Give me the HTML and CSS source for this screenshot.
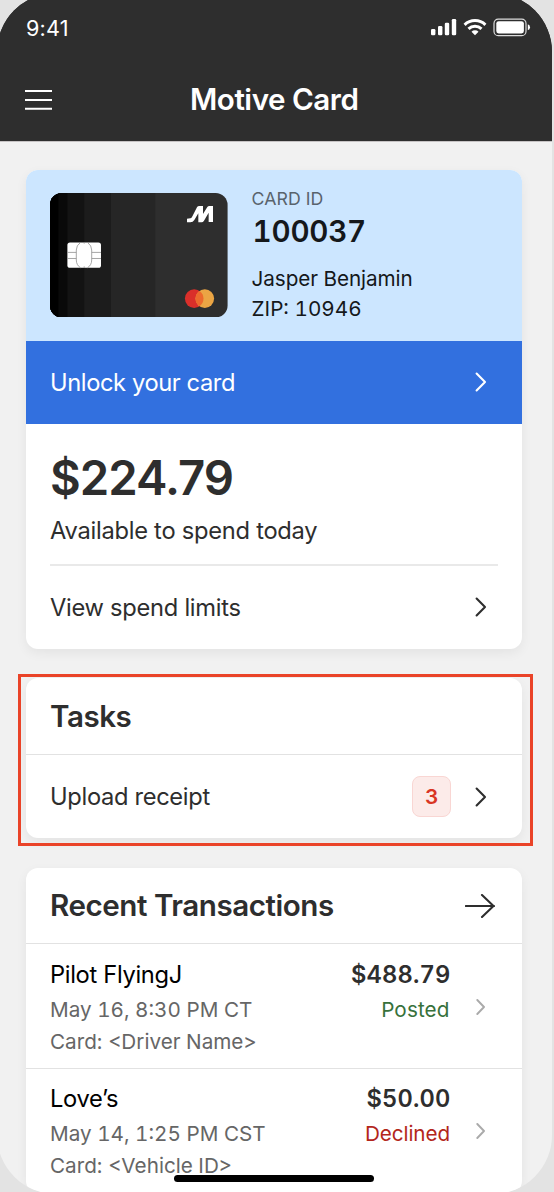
FILE: index.html
```
<!DOCTYPE html>
<html lang="en">
<head>
<meta charset="utf-8">
<title>Motive Card</title>
<link rel="stylesheet" href="styles.css">
</head>
<body>
<div class="phone">
  <header class="header">
    <div class="status">
      <span class="time">9:41</span>
      <svg class="status-icons" viewBox="431 18 100 19" fill="#fff">
        <rect x="431" y="29" width="4.4" height="6.2" rx="1.3"/>
        <rect x="438" y="26" width="4.4" height="9.2" rx="1.3"/>
        <rect x="444.8" y="22.7" width="4.4" height="12.5" rx="1.3"/>
        <rect x="451.8" y="19" width="4.4" height="16.2" rx="1.3"/>
        <g fill="none" stroke="#fff" stroke-width="3">
          <path d="M464.6 24.8 A15 15 0 0 1 485.4 24.8"/>
          <path d="M468.5 28.8 A9.4 9.4 0 0 1 481.5 28.8"/>
        </g>
        <path d="M471.5 31.8 A5 5 0 0 1 478.5 31.8 L475 35.3 Z"/>
        <rect x="494" y="19.2" width="32" height="16.4" rx="4.2" fill="none" stroke="#dcdcdc" stroke-width="1.2"/>
        <rect x="496.3" y="21.2" width="27.6" height="12.2" rx="2.4"/>
        <path d="M527.8 24.3 Q530 25 530 27.3 Q530 29.6 527.8 30.3 Z"/>
      </svg>
    </div>
    <div class="nav">
      <svg class="menu" viewBox="0 0 27 20" stroke="#fff" stroke-width="2"><path d="M0 1H27M0 10H27M0 18.8H27"/></svg>
      <h1 class="title">Motive Card</h1>
    </div>
  </header>

  <main class="content">
    <section class="card">
      <div class="summary">
        <svg class="plastic" viewBox="50 193 177.6 124.4">
          <clipPath id="edge"><rect x="50" y="193" width="177.6" height="124.4" rx="12"/></clipPath>
          <g clip-path="url(#edge)">
            <rect x="50" y="193" width="178" height="125" fill="#2e2e2e"/>
            <rect x="50" y="193" width="105.3" height="125" fill="#262626"/>
            <rect x="50" y="193" width="61" height="125" fill="#1c1c1c"/>
            <rect x="50" y="193" width="34.2" height="125" fill="#131313"/>
            <rect x="50" y="193" width="17.4" height="125" fill="#090909"/>
            <rect x="50" y="193" width="8.4" height="125" fill="#000"/>
          </g>
          <rect x="67.4" y="242.4" width="33.6" height="25.4" rx="2.6" fill="#fff"/>
          <path d="M67.4 252.4H76.3M67.4 258.5H76.3M91.7 252.4H101M91.7 258.5H101M80.5 242.4Q76.3 245.5 76.3 250V260Q76.3 265 80.5 267.8M87.5 242.4Q91.7 245.5 91.7 250V260Q91.7 265 87.5 267.8M84.2 242.4V243.6M84.2 266.4V267.8" fill="none" stroke="#8f8f8f" stroke-width=".8"/>
          <path transform="translate(20 160) scale(.33333)" fill="#fff" d="M501 176L511 175Q514 175 516 171L531 142Q533 138 538 138L549 138L549 162L562 141Q564 138 568 138L579 138L579 186L566 186L566 158L552 182Q549 187 545 187L535 187L535 160L523 180Q519 187 511 187L501 187Z"/>
          <circle cx="194.2" cy="298.6" r="9.3" fill="#da2f2a"/>
          <circle cx="204.8" cy="298.6" r="9.3" fill="#eba544"/>
          <path d="M199.5 290.95A9.3 9.3 0 0 1 199.5 306.25A9.3 9.3 0 0 1 199.5 290.95Z" fill="#ec6a2d"/>
        </svg>
        <div class="holder">
          <span class="label">CARD ID</span>
          <span class="card-id">100037</span>
          <span class="small">Jasper Benjamin</span>
          <span class="small zip">ZIP: 10946</span>
        </div>
      </div>
      <div class="row unlock">
        <span class="body">Unlock your card</span>
        <svg class="chevron" viewBox="0 0 12 20"><path d="M1.6 1.6L10 10L1.6 18.4"/></svg>
      </div>
      <div class="balance">
        <div class="amount">$224.79</div>
        <div class="body available">Available to spend today</div>
      </div>
      <div class="row limits">
        <span class="body">View spend limits</span>
        <svg class="chevron" viewBox="0 0 12 20"><path d="M1.6 1.6L10 10L1.6 18.4"/></svg>
      </div>
    </section>

    <div class="highlighted">
      <section class="card">
        <div class="head"><h2 class="heading">Tasks</h2></div>
        <div class="row upload">
          <span class="body">Upload receipt</span>
          <span class="badge">3</span>
          <svg class="chevron" viewBox="0 0 12 20"><path d="M1.6 1.6L10 10L1.6 18.4"/></svg>
        </div>
      </section>
      <div class="highlight"></div>
    </div>

    <section class="card list">
      <div class="head">
        <h2 class="heading recent">Recent Transactions</h2>
        <svg class="arrow" viewBox="0 0 30 24"><path d="M.8 12H29M17 1L28.5 12L17 23"/></svg>
      </div>
      <div class="txn">
        <div class="who">
          <div class="name">Pilot FlyingJ</div>
          <div class="meta">May 16, 8:30 PM CT</div>
          <div class="meta">Card: &lt;Driver Name&gt;</div>
        </div>
        <div class="sum">
          <div class="price">$488.79</div>
          <div class="meta posted">Posted</div>
        </div>
        <svg class="chevron small-chevron" viewBox="0 0 10 16"><path d="M1.3 1L8 8L1.3 15"/></svg>
      </div>
      <div class="txn">
        <div class="who">
          <div class="name">Love’s</div>
          <div class="meta">May 14, 1:25 PM CST</div>
          <div class="meta">Card: &lt;Vehicle ID&gt;</div>
        </div>
        <div class="sum">
          <div class="price">$50.00</div>
          <div class="meta declined">Declined</div>
        </div>
        <svg class="chevron small-chevron" viewBox="0 0 10 16"><path d="M1.3 1L8 8L1.3 15"/></svg>
      </div>
    </section>
  </main>
  <div class="home-indicator"></div>
</div>
</body>
</html>
```
FILE: styles.css
```
* { box-sizing: border-box; }
body {
  margin: 0;
  height: 1192px;
  overflow: hidden;
  background: #e3e3e3;
  font-family: Inter, "Liberation Sans", sans-serif;
  color: #2e2e2e;
}
h1, h2 { margin: 0; }
svg { display: block; flex: none; }

.phone {
  position: relative;
  width: 554.5px;
  height: 1201px;
  margin: -7px 0 0 -3px;
  padding-top: 7px;
  border-radius: 59px;
  overflow: hidden;
  background: linear-gradient(#2e2e2e 80px, #f1f1f1 80px);
}
.header {
  height: 142px;
  background: #2e2e2e;
  border-bottom: 1px solid #c6c3c4;
  color: #fff;
}
.status {
  display: flex;
  align-items: center;
  justify-content: space-between;
  height: 57px;
  padding: 0 20.5px 0 29px;
}
.time { margin-bottom: 2px; font-size: 21.6px; line-height: 28px; letter-spacing: .2px; }
.status-icons { width: 100px; height: 19px; margin-bottom: 2px; }
.nav {
  display: grid;
  grid-template-columns: 27px 1fr 27px;
  align-items: center;
  height: 84px;
  padding: 1px 28px 0;
}
.menu { width: 27px; height: 20px; }
.title { margin-bottom: 2px; font-size: 29.6px; font-weight: 600; line-height: 36px; letter-spacing: -.47px; text-align: center; }

.content {
  display: flex;
  flex-direction: column;
  gap: 29.5px;
  padding: 27.5px 29.5px 0 29px;
}
.card {
  border-radius: 12px;
  background: #fff;
  box-shadow: 0 4px 12px rgba(0, 0, 0, .06);
  overflow: hidden;
}
.summary {
  display: flex;
  gap: 24px;
  height: 171.2px;
  padding: 23.5px 24px 0;
  background: #cce6ff;
}
.plastic { width: 177.6px; height: 124.4px; }
.holder { display: flex; flex-direction: column; color: #15181b; }
.label { margin-top: -4px; font-size: 17.7px; line-height: 20px; letter-spacing: .05px; color: #59636c; }
.card-id {
  margin: 4px 0 15px 1px;
  font-size: 29.6px;
  font-weight: 600;
  line-height: 36px;
  letter-spacing: -.25px;
  font-variant-numeric: tabular-nums;
}
.small { font-size: 20.7px; line-height: 29.5px; letter-spacing: -.08px; font-variant-numeric: tabular-nums; }
.zip { letter-spacing: 0; }

.row {
  display: flex;
  align-items: center;
  height: 82.8px;
  padding: 0 35px 0 24px;
}
.row .body { flex: 1; }
.body { font-size: 23.7px; line-height: 32px; letter-spacing: -.33px; }
.available { letter-spacing: -.26px; }
.unlock { height: 82.9px; background: #3270df; color: #fff; }
.unlock .body { padding-top: 1px; letter-spacing: -.4px; }
.limits .body { padding-top: 2px; letter-spacing: -.28px; }
.chevron { width: 12px; height: 20px; fill: none; stroke: currentColor; stroke-width: 2.1; stroke-linecap: round; stroke-linejoin: round; }
.balance {
  height: 142.4px;
  margin: 0 24px;
  padding-top: 25.6px;
  border-bottom: 2px solid #e9e9e9;
}
.amount { margin-bottom: 8.5px; font-size: 47.3px; font-weight: 600; line-height: 57px; letter-spacing: -.98px; }

.head {
  display: flex;
  align-items: center;
  justify-content: space-between;
  height: 76.5px;
  padding: 0 27.5px 0 24px;
  border-bottom: 1px solid #e2e2e2;
}
.heading { font-size: 29.6px; font-weight: 600; line-height: 36px; letter-spacing: -.47px; }
.recent { margin-bottom: 1px; }
.highlighted { position: relative; }
.highlight {
  position: absolute;
  inset: -4px -10.5px -7.5px -8.5px;
  border: 3px solid #ea4328;
}
.upload { height: 83.5px; }
.badge {
  width: 38.4px;
  height: 41px;
  margin-right: 24.2px;
  border: 1px solid #f9d6d3;
  border-radius: 8px;
  background: #fcebe9;
  color: #d93524;
  font-size: 20.7px;
  font-weight: 600;
  line-height: 39px;
  text-align: center;
}
.arrow { width: 30px; height: 24px; fill: none; stroke: #2e2e2e; stroke-width: 2.1; stroke-linecap: round; stroke-linejoin: round; }

.txn {
  display: flex;
  height: 124.3px;
  padding: 15.3px 36.5px 0 24px;
  border-bottom: 1px solid #e2e2e2;
}
.who { flex: 1; }
.name { margin-bottom: 4.2px; font-size: 23.7px; line-height: 30px; letter-spacing: -.33px; color: #000; }
.meta { font-size: 20.7px; line-height: 32.3px; letter-spacing: 0; color: #666; font-variant-numeric: tabular-nums; }
.sum { margin-right: 25px; text-align: right; }
.price { margin-bottom: 4.2px; font-size: 23.7px; font-weight: 600; line-height: 30px; letter-spacing: .15px; font-variant-numeric: tabular-nums; }
.posted { padding-right: 1px; letter-spacing: .1px; color: #37713b; }
.declined { padding-right: .5px; letter-spacing: -.09px; color: #b3261b; }
.small-chevron { width: 10px; height: 16px; margin-top: 39px; stroke: #aaa; stroke-width: 1.9; }

.home-indicator {
  position: absolute;
  left: 177px;
  top: 1182px;
  width: 200px;
  height: 7.3px;
  border-radius: 4px;
  background: #000;
}
```
